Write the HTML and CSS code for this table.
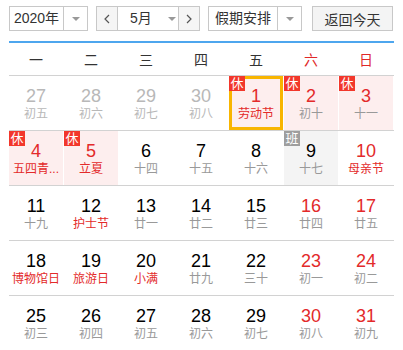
FILE: index.html
```html
<!DOCTYPE html>
<html lang="zh-CN">
<head>
<meta charset="utf-8">
<link rel="stylesheet" href="styles.css">
</head>
<body>
<div class="cal">
  <div class="toolbar">
    <div class="select year">
      <span class="sel-text">2020年</span>
      <span class="sel-arrow"><i class="tri"></i></span>
    </div>
    <div class="select month">
      <span class="nav prev"><svg width="6" height="10" viewBox="0 0 6 10"><polyline points="5,1 1,5 5,9" fill="none" stroke="#555" stroke-width="1.2"/></svg></span>
      <span class="sel-text m">5月<i class="tri"></i></span>
      <span class="nav next"><svg width="6" height="10" viewBox="0 0 6 10"><polyline points="1,1 5,5 1,9" fill="none" stroke="#555" stroke-width="1.2"/></svg></span>
    </div>
    <div class="select holiday">
      <span class="sel-text">假期安排</span>
      <span class="sel-arrow"><i class="tri"></i></span>
    </div>
    <div class="btn-today">返回今天</div>
  </div>
  <div class="weekdays">
    <span>一</span><span>二</span><span>三</span><span>四</span><span>五</span><span class="we">六</span><span class="we">日</span>
  </div>
  <div class="week">
    <div class="day other"><b>27</b><em>初五</em></div>
    <div class="day other"><b>28</b><em>初六</em></div>
    <div class="day other"><b>29</b><em>初七</em></div>
    <div class="day other"><b>30</b><em>初八</em></div>
    <div class="day rest selected red"><i class="badge">休</i><b>1</b><em class="fest">劳动节</em></div>
    <div class="day rest red"><i class="badge">休</i><b>2</b><em>初十</em></div>
    <div class="day rest red"><i class="badge">休</i><b>3</b><em>十一</em></div>
  </div>
  <div class="week">
    <div class="day rest red"><i class="badge">休</i><b>4</b><em class="fest">五四青...</em></div>
    <div class="day rest red"><i class="badge">休</i><b>5</b><em class="fest">立夏</em></div>
    <div class="day"><b>6</b><em>十四</em></div>
    <div class="day"><b>7</b><em>十五</em></div>
    <div class="day"><b>8</b><em>十六</em></div>
    <div class="day work"><i class="badge grey">班</i><b>9</b><em>十七</em></div>
    <div class="day red"><b>10</b><em class="fest">母亲节</em></div>
  </div>
  <div class="week">
    <div class="day"><b>11</b><em>十九</em></div>
    <div class="day"><b>12</b><em class="fest">护士节</em></div>
    <div class="day"><b>13</b><em>廿一</em></div>
    <div class="day"><b>14</b><em>廿二</em></div>
    <div class="day"><b>15</b><em>廿三</em></div>
    <div class="day red"><b>16</b><em>廿四</em></div>
    <div class="day red"><b>17</b><em>廿五</em></div>
  </div>
  <div class="week">
    <div class="day"><b>18</b><em class="fest">博物馆日</em></div>
    <div class="day"><b>19</b><em class="fest">旅游日</em></div>
    <div class="day"><b>20</b><em class="fest">小满</em></div>
    <div class="day"><b>21</b><em>廿九</em></div>
    <div class="day"><b>22</b><em>三十</em></div>
    <div class="day red"><b>23</b><em>初一</em></div>
    <div class="day red"><b>24</b><em>初二</em></div>
  </div>
  <div class="week">
    <div class="day"><b>25</b><em>初三</em></div>
    <div class="day"><b>26</b><em>初四</em></div>
    <div class="day"><b>27</b><em>初五</em></div>
    <div class="day"><b>28</b><em>初六</em></div>
    <div class="day"><b>29</b><em>初七</em></div>
    <div class="day red"><b>30</b><em>初八</em></div>
    <div class="day red"><b>31</b><em>初九</em></div>
  </div>
</div>
</body>
</html>
```
FILE: styles.css
```css
* { box-sizing: border-box; }
body {
  margin: 0;
  background: #fff;
  font-family: "Liberation Sans", "Noto Sans CJK SC", sans-serif;
  color: #333;
}
.cal {
  width: 403px;
  padding: 6px 9px 0 9px;
}
.toolbar {
  display: flex;
  height: 25px;
  font-size: 14px;
}
.select {
  display: flex;
  border: 1px solid #c8c8c8;
  background: #fff;
  height: 25px;
}
.year { width: 79px; }
.month { width: 104px; margin-left: 8px; }
.holiday { width: 94px; margin-left: 8px; }
.sel-text {
  flex: 1;
  display: flex;
  align-items: center;
  justify-content: center;
  color: #333;
  line-height: 23px;
}
.sel-arrow {
  width: 24px;
  border-left: 1px solid #c8c8c8;
  display: flex;
  align-items: center;
  justify-content: center;
}
.tri {
  display: block;
  width: 0;
  height: 0;
  border-left: 4px solid transparent;
  border-right: 4px solid transparent;
  border-top: 4px solid #999;
}
.nav {
  width: 21px;
  background: #f5f5f5;
  display: flex;
  align-items: center;
  justify-content: center;
}
.prev { border-right: 1px solid #c8c8c8; }
.next { border-left: 1px solid #c8c8c8; }
.sel-text.m {
  justify-content: flex-start;
  padding-left: 12px;
}
.sel-text.m .tri { margin-left: 16px; }
.btn-today {
  width: 81px;
  margin-left: 10px;
  height: 25px;
  border: 1px solid #c8c8c8;
  background: #f4f4f4;
  display: flex;
  align-items: center;
  justify-content: center;
  color: #333;
}
.weekdays {
  margin-top: 10px;
  border-top: 2px solid #4ea6ee;
  height: 34px;
  display: grid;
  grid-template-columns: repeat(7, 55px);
  font-size: 14px;
  align-items: center;
  justify-items: center;
  padding-right: 1px;
}
.weekdays span { color: #333; padding-right: 1px; }
.weekdays .we { color: #e02828; }
.week {
  display: grid;
  grid-template-columns: repeat(7, 55px);
  border-top: 1px solid #d2d2d2;
  height: 55px;
}
.day {
  position: relative;
  width: 54px;
  height: 54px;
  display: flex;
  flex-direction: column;
  align-items: center;
  padding-top: 10px;
}
.day b {
  font-weight: normal;
  font-size: 18px;
  line-height: 20px;
  color: #000;
}
.day em {
  font-style: normal;
  font-size: 12px;
  line-height: 16px;
  color: #999;
  white-space: nowrap;
}
.day.other b, .day.other em { color: #b8b8b8; }
.day.red b { color: #e32a2a; }
.day em.fest { color: #e32a2a; }
.day.rest { background: #fdeeee; }
.day.work { background: #f4f4f4; }
.day.selected {
  border: 3px solid #f8b500;
  padding-top: 7px;
}
.badge {
  position: absolute;
  top: 0;
  left: 0;
  width: 16px;
  height: 15px;
  background: #f2372b;
  color: #fff;
  font-style: normal;
  font-size: 13px;
  line-height: 15px;
  text-align: center;
}
.selected .badge { top: -3px; left: -3px; }
.badge.grey { background: #9e9e9e; }
```
